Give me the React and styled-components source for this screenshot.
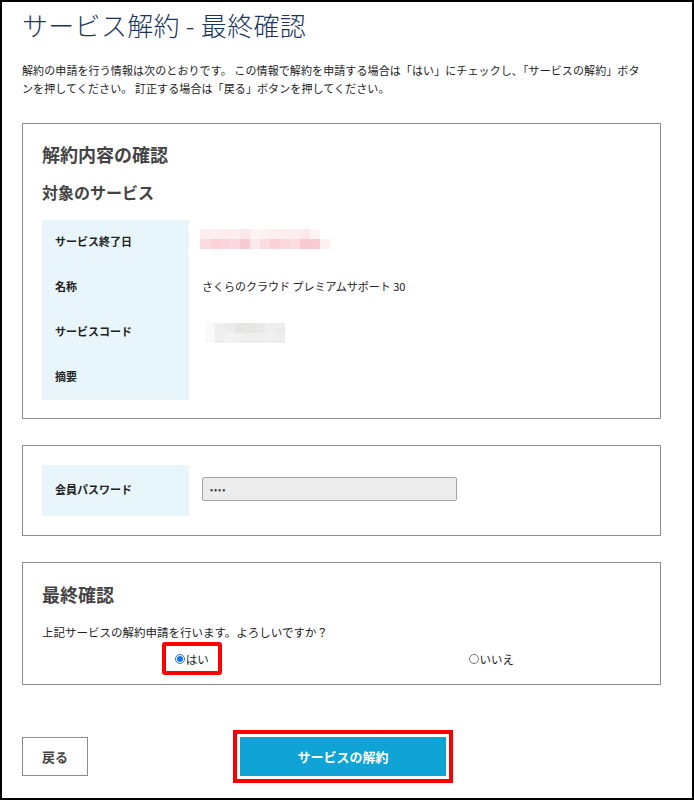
import React from 'react';
import styled, { createGlobalStyle } from 'styled-components';

const GlobalStyle = createGlobalStyle`
  body {
    margin: 0;
    background: #fff;
    font-family: "Noto Sans CJK JP", "Noto Sans", sans-serif;
    color: #222;
  }
`;

const Frame = styled.div`
  width: 694px;
  height: 800px;
  box-sizing: border-box;
  border: 2px solid #000;
  padding: 7px 31px 0 20px;
  overflow: hidden;
`;

const Title = styled.h1`
  margin: 0;
  font-size: 26px;
  line-height: 32px;
  font-weight: 300;
  color: #1b365f;
  letter-spacing: 0.3px;
`;

const Intro = styled.p`
  margin: 20px 0 0;
  font-size: 11px;
  line-height: 18px;
  letter-spacing: 0.1px;
  white-space: nowrap;
`;

const Card = styled.section`
  margin-top: ${p => p.$gap || 26}px;
  border: 1px solid #8c8c8c;
  padding: ${p => p.$pad || '18px 19px 18px 19px'};
`;

const Heading = styled.h2`
  margin: 0;
  font-size: 18px;
  line-height: 24px;
  font-weight: 700;
  color: #444;
`;

const SubHeading = styled.h3`
  margin: 15px 0 17px;
  font-size: 16px;
  line-height: 22px;
  font-weight: 700;
  color: #444;
`;

const Table = styled.div`
  display: grid;
  grid-template-columns: 147px 1fr;
`;

const Label = styled.div`
  background: #e8f5fb;
  height: ${p => p.$h || 45}px;
  box-sizing: border-box;
  display: flex;
  align-items: center;
  padding: 0 0 3px 13px;
  font-size: 11px;
  font-weight: 700;
  color: #222;
`;

const Value = styled.div`
  height: ${p => p.$h || 45}px;
  box-sizing: border-box;
  display: flex;
  align-items: center;
  padding: 0 0 3px ${p => p.$indent || 13}px;
  font-size: 11px;
  color: #222;
`;

const Mosaic = styled.div`
  display: grid;
  grid-template-columns: repeat(${p => p.$cols}, 10px);
  grid-auto-rows: 10px;
  margin-top: ${p => p.$shift || 0}px;
`;

const Cell = styled.div`
  background: ${p => p.$c};
`;

const PasswordInput = styled.input`
  width: 255px;
  height: 24px;
  box-sizing: border-box;
  border: 1px solid #a3a3a3;
  border-radius: 2px;
  background: #ececec;
  padding: 0 7px;
  font-size: 9px;
  letter-spacing: 1px;
  color: #444;
  font-family: inherit;
`;

const Question = styled.p`
  margin: 17px 0 1px;
  font-size: 11.5px;
  line-height: 18px;
`;

const Choices = styled.div`
  display: grid;
  grid-template-columns: 1fr 1fr;
  justify-items: center;
  align-items: center;
  height: 33px;
`;

const Choice = styled.label`
  display: flex;
  align-items: center;
  font-size: 11.5px;
  color: #222;
  box-sizing: border-box;
  height: 33px;
  padding: 0 ${p => (p.$marked ? 9 : 0)}px;
  border: ${p => (p.$marked ? '4px solid #ff0000' : '4px solid transparent')};
  border-radius: 3px;
  input {
    margin: 0 1px 0 0;
    width: 10px;
    height: 10px;
    accent-color: #1a73e8;
  }
`;

const Actions = styled.div`
  display: flex;
  align-items: center;
  margin-top: 52px;
`;

const BackButton = styled.button`
  width: 66px;
  height: 39px;
  border: 1px solid #8c8c8c;
  background: #fff;
  font-family: inherit;
  font-size: 13px;
  font-weight: 700;
  color: #444;
  padding: 0;
`;

const SubmitButton = styled.button`
  width: 206px;
  height: 39px;
  margin-left: 152px;
  border: none;
  border-radius: 0;
  background: #0fa3d6;
  color: #fff;
  font-family: inherit;
  font-size: 13px;
  font-weight: 700;
  padding: 0;
  outline: 4px solid #ff0000;
  outline-offset: 3px;
`;

const pinkTop = ['#fdeef1', '#fdeef1', '#fdecef', '#fdeef1', '#fce7eb', '#fef2f4', '#fef1f3', '#fdeef1', '#fdeef1', '#fdedf0', '#fce7eb', '#fef3f5', '#ffffff'];
const pinkBottom = ['#fbdce1', '#fad2d8', '#fbd5db', '#fbd9de', '#f9c9d0', '#fde8eb', '#fbdce1', '#fad0d7', '#fbd8dd', '#fbdce1', '#f9c9d0', '#f9cbd2', '#fdf0f3'];
const grayTop = ['#fafaf8', '#eeeef0', '#ececec', '#e6e6e4', '#e6e6e4', '#e8e8e8', '#eeeeee', '#ececec'];
const grayBottom = ['#fafafa', '#eeeeef', '#f2f2f2', '#f0f0f0', '#eeeeee', '#eeeeee', '#f0f0f0', '#eeeeee'];

const Blur = ({ rows, shift }) => (
  <Mosaic $cols={rows[0].length} $shift={shift}>
    {rows.flat().map((c, i) => (
      <Cell key={i} $c={c} />
    ))}
  </Mosaic>
);

const App = () => {
  const [answer, setAnswer] = React.useState('yes');
  return (
    <>
      <GlobalStyle />
      <Frame>
        <Title>サービス解約 - 最終確認</Title>
        <Intro>
          解約の申請を行う情報は次のとおりです。 この情報で解約を申請する場合は「はい」にチェックし、「サービスの解約」ボタ
          <br />
          ンを押してください。 訂正する場合は「戻る」ボタンを押してください。
        </Intro>

        <Card>
          <Heading>解約内容の確認</Heading>
          <SubHeading>対象のサービス</SubHeading>
          <Table>
            <Label>サービス終了日</Label>
            <Value $indent={11}>
              <Blur rows={[pinkTop, pinkBottom]} shift={-4} />
            </Value>
            <Label>名称</Label>
            <Value>さくらのクラウド プレミアムサポート 30</Value>
            <Label>サービスコード</Label>
            <Value $indent={16}>
              <Blur rows={[grayTop, grayBottom]} shift={3} />
            </Value>
            <Label>摘要</Label>
            <Value />
          </Table>
        </Card>

        <Card $pad="19px 19px 19px 19px">
          <Table>
            <Label $h={51}>会員パスワード</Label>
            <Value $h={51}>
              <PasswordInput type="password" defaultValue="xxxx" readOnly />
            </Value>
          </Table>
        </Card>

        <Card $pad="19px 19px 9px 19px">
          <Heading>最終確認</Heading>
          <Question>上記サービスの解約申請を行います。よろしいですか？</Question>
          <Choices>
            <Choice $marked>
              <input
                type="radio"
                name="confirm"
                checked={answer === 'yes'}
                onChange={() => setAnswer('yes')}
              />
              はい
            </Choice>
            <Choice>
              <input
                type="radio"
                name="confirm"
                checked={answer === 'no'}
                onChange={() => setAnswer('no')}
              />
              いいえ
            </Choice>
          </Choices>
        </Card>

        <Actions>
          <BackButton>戻る</BackButton>
          <SubmitButton>サービスの解約</SubmitButton>
        </Actions>
      </Frame>
    </>
  );
};

export default App;
